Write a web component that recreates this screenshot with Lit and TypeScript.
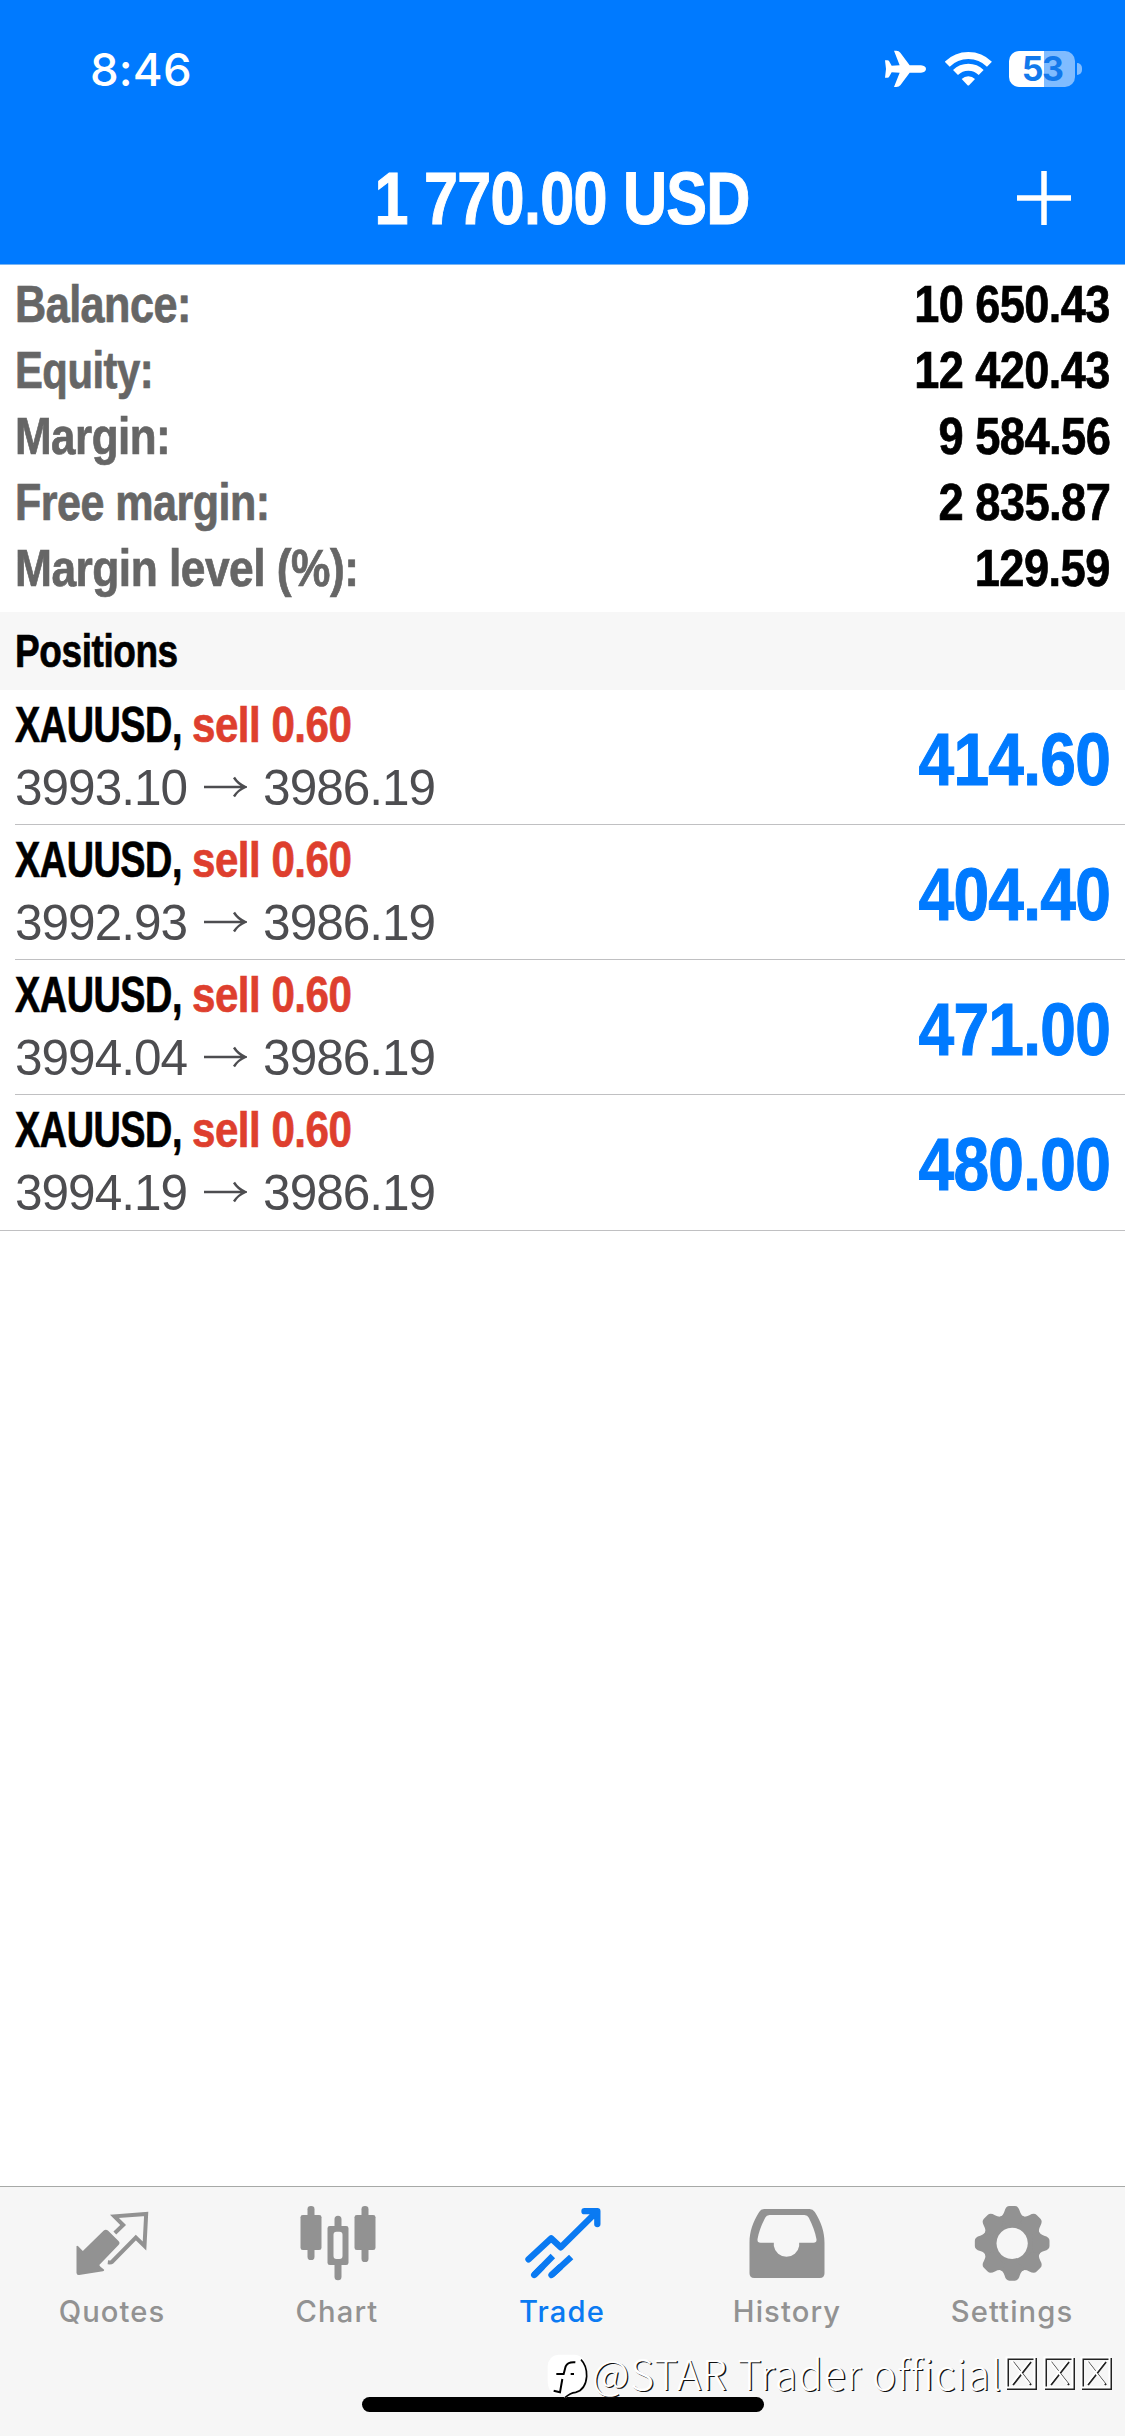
import { LitElement, html, css, svg } from "lit";
import { customElement, property } from "lit/decorators.js";

interface Row { label: string; value: string; fit: number; valueFit: number }
interface Position { symbol: string; side: string; open: string; current: string; profit: string }

const summary: Row[] = [
  { label: "Balance:", value: "10 650.43", fit: 0.822, valueFit: 0.859 },
  { label: "Equity:", value: "12 420.43", fit: 0.796, valueFit: 0.859 },
  { label: "Margin:", value: "9 584.56", fit: 0.838, valueFit: 0.862 },
  { label: "Free margin:", value: "2 835.87", fit: 0.82, valueFit: 0.862 },
  { label: "Margin level (%):", value: "129.59", fit: 0.845, valueFit: 0.862 },
];

const positions: Position[] = [
  { symbol: "XAUUSD,", side: "sell 0.60", open: "3993.10", current: "3986.19", profit: "414.60" },
  { symbol: "XAUUSD,", side: "sell 0.60", open: "3992.93", current: "3986.19", profit: "404.40" },
  { symbol: "XAUUSD,", side: "sell 0.60", open: "3994.04", current: "3986.19", profit: "471.00" },
  { symbol: "XAUUSD,", side: "sell 0.60", open: "3994.19", current: "3986.19", profit: "480.00" },
];

const quotesIcon = svg`<svg viewBox="217.5 66 240 240">
  <path fill="currentColor" d="M309 152Q316 146 323 152L354 183Q360 189 354 195L297 254Q296 257 300 260L311 269Q312 273 307 274L236 285Q228 286 228 278V199Q229 195 233 199L247 213Z"/>
  <path fill="none" stroke="currentColor" stroke-width="12" d="M343 159L368 135L342 109L437 102L432 198L406 173L334 246Q332 248 322 247"/>
</svg>`;

const chartIcon = svg`<svg viewBox="892.5 66 240 240" fill="currentColor">
  <rect x="900" y="105" width="63" height="105" rx="7"/><rect x="921" y="78" width="21" height="162" rx="10"/>
  <path fill-rule="evenodd" d="M988 138H1037Q1044 138 1044 145V248Q1044 255 1037 255H988Q981 255 981 248V145Q981 138 988 138ZM1008 155Q999 155 999 164V228Q999 237 1008 237H1017Q1026 237 1026 228V164Q1026 155 1017 155Z"/>
  <path d="M1002 140V118a10.5 10.5 0 0 1 21 0V140ZM1002 253V290a10.5 10.5 0 0 0 21 0V253Z"/>
  <rect x="1062" y="105" width="63" height="105" rx="7"/><rect x="1083" y="78" width="21" height="168" rx="10"/>
</svg>`;

const tradeIcon = svg`<svg viewBox="367.5 66 240 240" fill="none" stroke="currentColor" stroke-width="19" stroke-linecap="round" stroke-linejoin="round">
  <path d="M384 238L452 175L481 202L588 96M552 93.500H590.500V132"/>
  <path d="M401 285L424 262M453 285L478 262"/>
  <path stroke-linecap="butt" d="M401 285L457 228M453 285L512 231"/>
</svg>`;

const historyIcon = svg`<svg viewBox="67.500 66 240 240" fill="currentColor">
  <path fill-rule="evenodd" d="M116 87H252Q262 87 268 96C287 127 297 155 297 188V280Q297 294 283 294H86Q72 294 72 280V188C72 155 82 127 101 96Q106 87 116 87ZM132 105Q123 105 119 113C108 135 100 155 96 178Q95 188 105 188H145V198A38.500 38.500 0 0 0 221 198V188H264Q274 188 273 178C269 155 261 135 250 113Q246 105 237 105Z"/>
</svg>`;

const toothAngles = [0, 45, 90, 135, 180, 225, 270, 315];
const settingsIcon = svg`<svg viewBox="742.500 66 240 240">
  <g fill="currentColor"><path fill-rule="evenodd" d="M860 102a88 88 0 1 0 .1 0ZM860 143a47 47 0 1 1 -.1 0Z"/>
  ${toothAngles.map((a) => svg`<path transform="rotate(${a} 860 190)" d="M821 113Q833 108 837 94Q841 78 852 78H868Q879 78 883 94Q887 108 899 113L880 130H840Z"/>`)}</g>
</svg>`;

const tabs = [
  { name: "Quotes", icon: quotesIcon },
  { name: "Chart", icon: chartIcon },
  { name: "Trade", icon: tradeIcon, active: true },
  { name: "History", icon: historyIcon },
  { name: "Settings", icon: settingsIcon },
];

/** Horizontally condensed text, scaled from its left or right edge. */
@customElement("condensed-text")
class CondensedText extends LitElement {
  @property({ type: Number }) fit = 0.82;
  @property() origin = "left";
  static styles = css`
    :host { display: block; white-space: nowrap; }
    .glyphs { display: block; width: max-content; letter-spacing: -0.012em; -webkit-text-stroke: 0.014em currentColor; }
    .right { margin-left: auto; }
  `;
  render() {
    return html`<span class="glyphs ${this.origin}"
      style="transform:scaleX(${this.fit});transform-origin:${this.origin}"><slot></slot></span>`;
  }
}

@customElement("app-root")
class AppRoot extends LitElement {
  static styles = css`
    :host { display: block; font-family: "Liberation Sans", Arial, sans-serif; }
    * { box-sizing: border-box; }
    svg { display: block; flex: none; }
    .screen { display: flex; flex-direction: column; width: 1125px; height: 2436px; background: #fff; overflow: hidden; }
    .header { flex: none; height: 265px; background: #007aff; color: #fff; border-bottom: 1px solid #79b5f3; }
    .status { display: flex; align-items: center; justify-content: space-between; height: 132px; padding: 6px 43px 0 90px; }
    .time { font: 500 45.5px Inter, sans-serif; letter-spacing: 0.2px; }
    .indicators { display: flex; align-items: center; }
    .plane { width: 43px; height: 38px; margin-right: 18px; }
    .wifi { width: 47px; height: 36px; margin-right: 17px; }
    .battery { display: flex; align-items: center; justify-content: center; width: 66px; height: 36px; border-radius: 10px;
      background: linear-gradient(90deg, #fff 35px, #80bcff 35px); color: #1279ec; font: 700 34px/36px Inter, sans-serif; letter-spacing: -1.5px; }
    .nub { width: 5px; height: 12px; margin-left: 2px; border-radius: 0 5px 5px 0; background: #80bcff; }
    .nav { display: grid; grid-template-columns: 140px 1fr 140px; align-items: center; height: 132px; }
    .title { display: flex; justify-content: center; font: bold 75px/132px "Liberation Sans", sans-serif; }
    .title-glyphs { transform: scaleX(0.815); white-space: nowrap; letter-spacing: -0.012em; -webkit-text-stroke: 0.014em #fff; }
    .add { width: 56px; height: 56px; margin-left: 31px; }
    .summary { flex: none; height: 347px; padding: 6px 15px 0 15px; font: bold 52.5px/66px "Liberation Sans", sans-serif; }
    .line { display: flex; justify-content: space-between; height: 66px; }
    .label { color: #666; }
    .value { color: #000; }
    .section { flex: none; height: 78px; padding-left: 15px; background: #f7f7f7; color: #000; font: bold 46.5px/78px "Liberation Sans", sans-serif; }
    .list { flex: none; border-bottom: 1px solid #c0c0c2; }
    .position { display: flex; justify-content: space-between; height: 135px; margin-left: 15px; padding: 1px 15px 0 0; border-bottom: 1px solid #c0c0c2; }
    .position:last-child { border-bottom: 0; }
    .deal { display: grid; grid-template-columns: 176.5px 200px; height: 66px; font: bold 49.5px/67px "Liberation Sans", sans-serif; }
    .symbol { color: #000; }
    .side { color: #de3f2e; }
    .prices { display: flex; align-items: center; height: 61px; color: #4d4d50; font-size: 49.5px; line-height: 61px; letter-spacing: -0.98px; white-space: nowrap; }
    .arrow { width: 43px; height: 22px; margin: 0 16px 2px 17px; }
    .profit { padding-top: 1px; color: #007aff; font: bold 74px/135px "Liberation Sans", sans-serif; }
    .space { flex: 1; }
    .tabbar { flex: none; position: relative; height: 250px; background: #f6f6f6; border-top: 1px solid #a7a9a7; }
    .tabs { display: grid; grid-template-columns: repeat(5, 225px); }
    .tab { display: flex; flex-direction: column; align-items: center; padding-top: 15px; color: #929292; }
    .tab svg { width: 80px; height: 80px; }
    .active { color: #0a7af2; }
    .tab-name { height: 40px; margin-top: 10px; font: 500 29.2px/40px Inter, sans-serif; letter-spacing: 1.1px; margin-right: 1px; }
    .home { position: absolute; left: 362px; bottom: 24px; width: 402px; height: 15px; border-radius: 8px; background: #000; }
    .mark { position: absolute; right: 8px; bottom: 32px; display: flex; align-items: center; height: 56px; }
    .mark-logo { width: 47px; height: 47px; }
    .mark-text { width: 413px; margin-top: -8px; font: 300 41px/56px "Noto Sans CJK SC", sans-serif; letter-spacing: 0.85px; color: #fff; text-shadow: 1.3px 1.3px 0 #111; white-space: nowrap; }
    .boxes { width: 112px; height: 36px; margin-top: -7px; }
  `;

  render() {
    return html`<main class="screen">
      <header class="header">
        <div class="status">
          <span class="time">8:46</span>
          <div class="indicators">
            <svg class="plane" viewBox="75 60 129 114" fill="#fff"><path d="M186 106Q201 108 201 117Q201 126 186 128L152 128L124 166Q120 171 112 171L105 171L122 128L98 127L90 141Q89 143 85 143L78 143L81 117L78 91L85 91Q89 91 90 93L98 107L122 106L105 62L112 62Q120 62 124 68L152 106Z"/></svg>
            <svg class="wifi" viewBox="257 62 141 108" fill="none" stroke="#fff" stroke-width="21"><path d="M263.700 101.700A89.500 89.500 0 0 1 390.300 101.700M288.500 126.500A54.500 54.500 0 0 1 365.500 126.500"/><path fill="#fff" stroke="none" d="M307 146A29 29 0 0 1 347 146L330 164Q327 167 324 164Z"/></svg>
            <span class="battery">53</span><i class="nub"></i>
          </div>
        </div>
        <div class="nav">
          <span></span>
          <div class="title"><span class="title-glyphs">1 770.00 USD</span></div>
          <svg class="add" viewBox="0 0 56 56" stroke="#fff" stroke-width="5.500"><path d="M28 1V55M1 28H55"/></svg>
        </div>
      </header>
      <section class="summary">
        ${summary.map((r) => html`<div class="line">
          <condensed-text class="label" .fit=${r.fit}>${r.label}</condensed-text>
          <condensed-text class="value" origin="right" .fit=${r.valueFit}>${r.value}</condensed-text>
        </div>`)}
      </section>
      <div class="section"><condensed-text .fit=${0.797}>Positions</condensed-text></div>
      <section class="list">
        ${positions.map((p) => html`<div class="position">
          <div>
            <div class="deal">
              <condensed-text class="symbol" .fit=${0.764}>${p.symbol}</condensed-text>
              <condensed-text class="side" .fit=${0.851}>${p.side}</condensed-text>
            </div>
            <div class="prices">
              <span>${p.open}</span>
              <svg class="arrow" viewBox="0 0 43 22" fill="none" stroke="#4d4d50" stroke-width="2.400"><path d="M0 11H41M30 1.500Q34 8 41.500 11Q34 14 30 20.500"/></svg>
              <span>${p.current}</span>
            </div>
          </div>
          <condensed-text class="profit" origin="right" .fit=${0.866}>${p.profit}</condensed-text>
        </div>`)}
      </section>
      <div class="space"></div>
      <footer class="tabbar">
        <nav class="tabs">
          ${tabs.map((t) => html`<div class="tab ${t.active ? "active" : ""}">${t.icon}<span class="tab-name">${t.name}</span></div>`)}
        </nav>
        <div class="home"></div>
        <div class="mark">
          <svg class="mark-logo" viewBox="20 40 141 141" fill="none" stroke="#000">
            <path fill="#fff" stroke="none" d="M60 45H110Q143 50 143 85V120Q143 158 108 160L80 176L74 165H55Q28 160 28 120V80Q30 48 60 45Z"/>
            <path stroke-width="6" d="M111 68Q88 66 82 80L76 103H54M72 118L65 158L46 153M97 103H107"/>
            <path stroke-width="5" d="M128 60Q146 78 145 110Q142 150 112 158Q95 160 80 174"/>
          </svg>
          <span class="mark-text">@STAR Trader official</span>
          <svg class="boxes" viewBox="0 0 112 36" fill="none">
            ${[1, 39, 76].map((x) => svg`<g transform="translate(${x} 2)"><path stroke="#222" stroke-width="2" d="M2 2H30V32H2ZM7 5L25 28M25 5L7 28"/><path stroke="#fff" stroke-width="2" d="M.5 .5H28.500V30.500H.500ZM5.500 4L23.500 27M23.500 4L5.500 27"/></g>`)}
          </svg>
        </div>
      </footer>
    </main>`;
  }
}
